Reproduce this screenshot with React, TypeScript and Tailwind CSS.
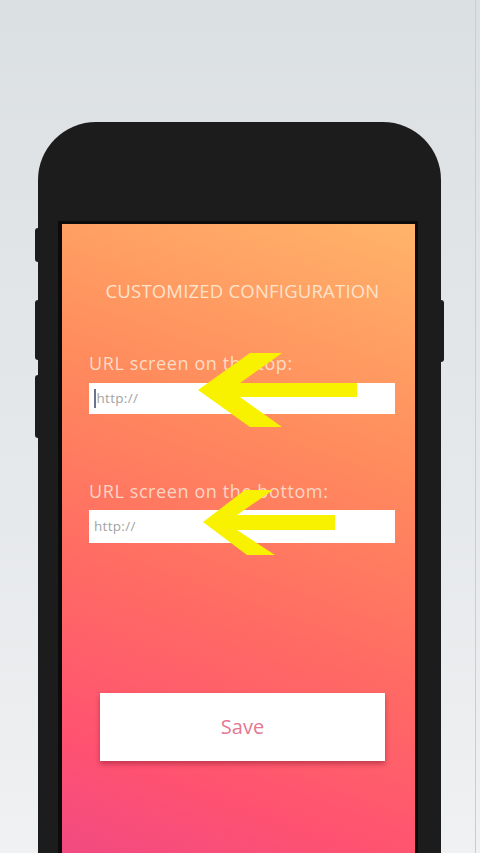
import React from "react";

export default function App() {
  return (
    <div
      className="relative h-[853px] w-[480px] overflow-hidden bg-[linear-gradient(180deg,#dbe0e3_0%,#e6e9eb_60%,#eff1f2_100%)]"
      style={{ fontFamily: '"Open Sans", "Noto Sans", sans-serif' }}
    >
      <div className="absolute right-[4px] top-0 h-full w-px bg-[#c9ced1]" />
      <div className="pt-[122px]">
        <div className="relative ml-[38px] h-[760px] w-[403px] rounded-t-[58px] bg-[#1c1c1c] pl-[20px] pr-[23px] pt-[99px]">
          {/* side buttons */}
          <div className="absolute left-[-3px] top-[106px] h-[34px] w-[3px] rounded-l-sm bg-[#1c1c1c]" />
          <div className="absolute left-[-3px] top-[178px] h-[60px] w-[3px] rounded-l-sm bg-[#1c1c1c]" />
          <div className="absolute left-[-3px] top-[253px] h-[63px] w-[3px] rounded-l-sm bg-[#1c1c1c]" />
          <div className="absolute right-[-3px] top-[178px] h-[62px] w-[3px] rounded-r-sm bg-[#1c1c1c]" />

          <div className="h-[700px] w-[360px] border-l-4 border-r-[3px] border-t-[3px] border-[#0b0b0b] bg-[linear-gradient(200deg,#ffb46a_0%,#ff8c5d_30%,#ff6c63_55%,#ff5271_78%,#e9458b_100%)]">
            <div className="flex flex-col pt-[55px]">
              <h1 className="pl-[8px] text-center text-[18.5px] leading-[24px] tracking-[0.2px] text-[#fde3cc]">
                CUSTOMIZED CONFIGURATION
              </h1>

              <div className="mt-[48px] flex flex-col pl-[27px] pr-[20px]">
                <label className="text-[18px] leading-[24px] tracking-[0.6px] text-[#fddcc5]">
                  URL screen on the top:
                </label>
                <div className="mt-[8px] flex h-[31px] items-center bg-white pl-[5px]">
                  <span className="mr-[1px] h-[19px] w-[1.5px] bg-[#6b7390]" />
                  <span className="text-[13.5px] tracking-[0.3px] text-[#a3a3a3]">http://</span>
                </div>

                <label className="mt-[65px] text-[18px] leading-[24px] tracking-[0.6px] text-[#fdd5c5]">
                  URL screen on the bottom:
                </label>
                <div className="mt-[7px] flex h-[33px] items-center bg-white pl-[5px]">
                  <span className="text-[13.5px] tracking-[0.3px] text-[#a3a3a3]">http://</span>
                </div>
              </div>

              <div className="mt-[150px] pl-[38px] pr-[30px]">
                <button className="flex h-[68px] w-full items-center justify-center bg-white text-[20px] text-[#e47893] shadow-[0_3px_5px_rgba(120,20,40,0.45)]">
                  Save
                </button>
              </div>
            </div>
          </div>
        </div>
      </div>

      {/* yellow annotation arrows */}
      <svg className="pointer-events-none absolute left-0 top-0" width="480" height="853" viewBox="0 0 480 853">
        <polygon
          fill="#f8f200"
          points="198,390 250,353 282,353 240,383 357,383 357,397 240,397 282,427 250,427"
        />
        <polygon
          fill="#f8f200"
          points="203,522 245,490 273,490 237,515 335,515 335,530 237,530 275,555 247,555"
        />
      </svg>
    </div>
  );
}
